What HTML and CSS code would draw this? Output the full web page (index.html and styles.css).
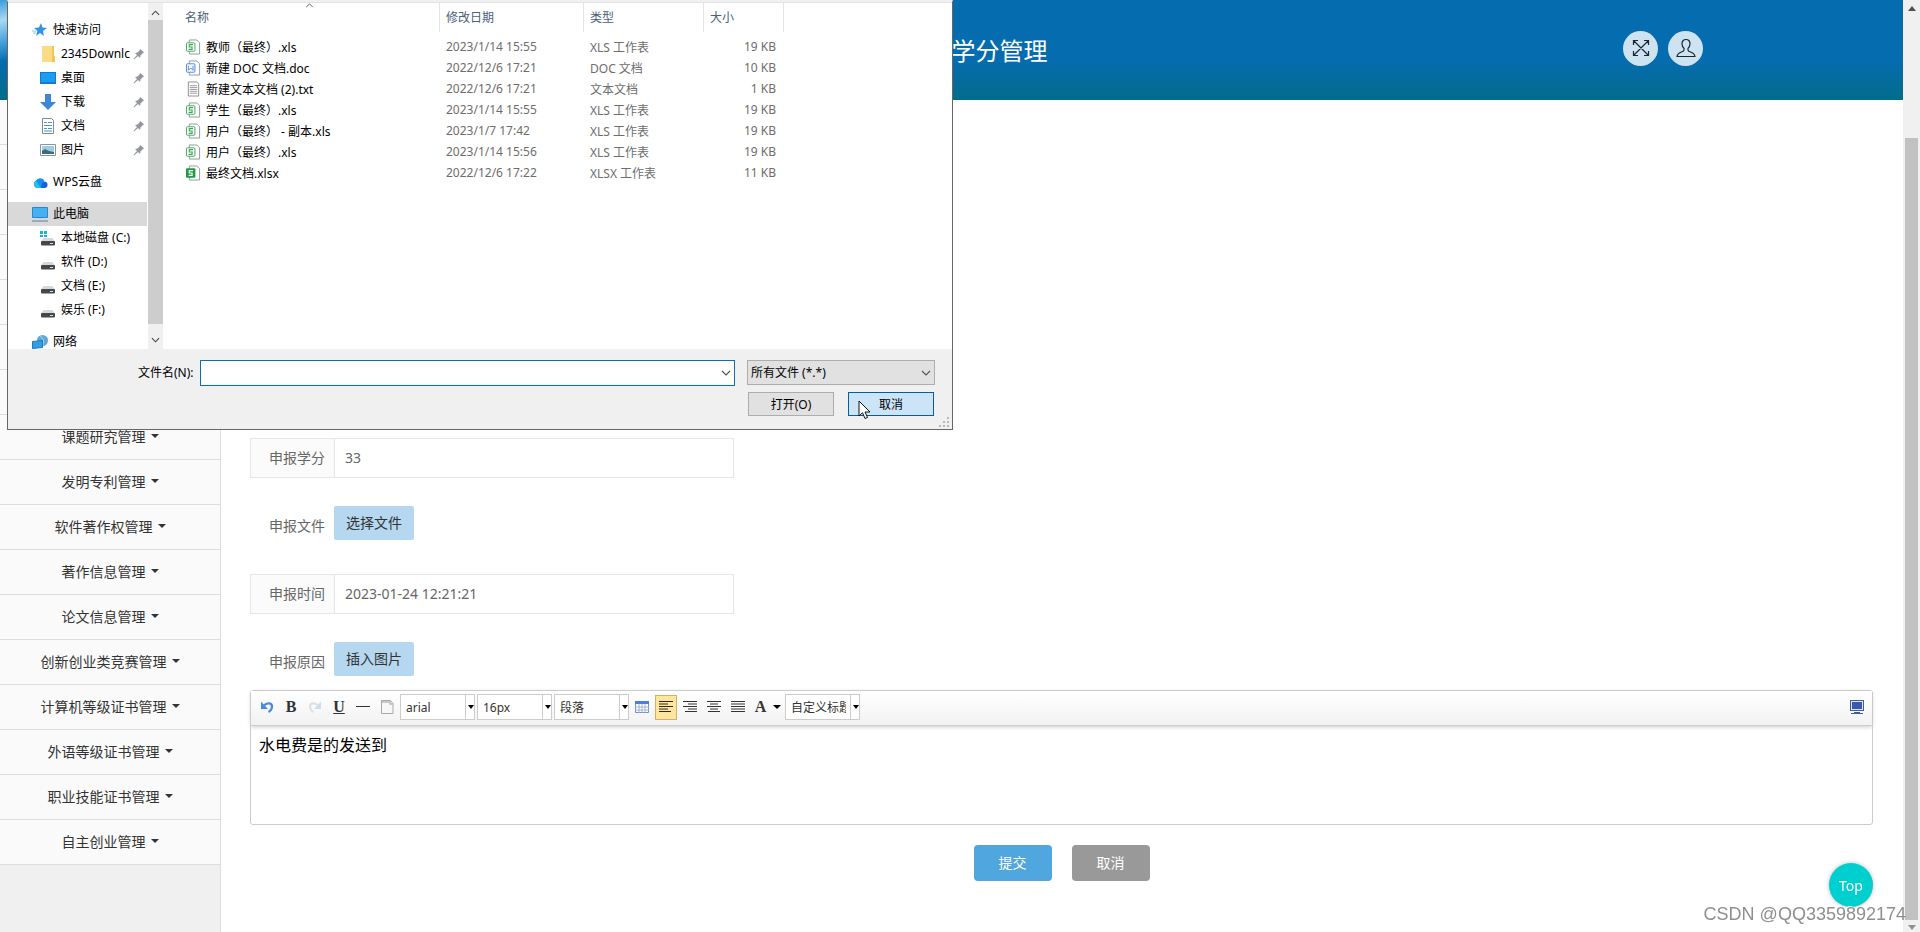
FILE: index.html
```html
<!DOCTYPE html>
<html lang="zh-CN">
<head>
<meta charset="utf-8">
<title>学分管理</title>
<link rel="stylesheet" href="styles.css">
</head>
<body>
<svg class="sprite" aria-hidden="true">
  <symbol id="pin" viewBox="0 0 12 12"><path d="M7.500 1L11 4.500 9.500 5.500 7.500 7.500 7 10 5 8 1 11.500.500 11 4 7 2 5 4.500 4.500 6.500 2.500z" fill="#92979d"/></symbol>
  <symbol id="xls" viewBox="0 0 16 16"><path d="M3.500.500h8l3 3v12h-11z" fill="#fff" stroke="#8c9a8f"/><rect x=".5" y="3.500" width="9" height="9" rx="1" fill="#fff" stroke="#3da65a"/><path d="M7.500 5.500h-4V8h3v2.500H2.800" fill="none" stroke="#3da65a" stroke-width="1.200"/></symbol>
  <symbol id="xlsx" viewBox="0 0 16 16"><path d="M3.500.500h8l3 3v12h-11z" fill="#fff" stroke="#8c9a8f"/><rect x="0" y="3" width="10" height="10" rx="1" fill="#219a43"/><path d="M7.500 5.500h-4V8h3v2.500H2.800" fill="none" stroke="#fff" stroke-width="1.200"/></symbol>
  <symbol id="doc" viewBox="0 0 16 16"><path d="M3.500.500h8l3 3v12h-11z" fill="#fff" stroke="#8e97a5"/><rect x=".5" y="3.500" width="9" height="9" rx="1" fill="#fff" stroke="#4c83d8"/><path d="M2.500 5.500v5L5 8l2.500 2.500v-5" fill="none" stroke="#4c83d8"/></symbol>
  <symbol id="txt" viewBox="0 0 16 16"><path d="M2.500.500h9l2 2v13h-11z" fill="#fff" stroke="#8a8a8a"/><path d="M4 4.500h8M4 6.500h8M4 8.500h8M4 10.500h8M4 12.500h8" stroke="#999"/></symbol>
  <symbol id="disk" viewBox="0 0 16 16"><path d="M4 8h8l3 3H1z" fill="#d4d6d8"/><rect x="1" y="11" width="14" height="4.500" rx="1" fill="#45484b"/><path d="M10 13.500h3" stroke="#cfe8d2"/></symbol>
  <symbol id="chev" viewBox="0 0 10 6"><path d="M1 1l4 4 4-4" fill="none" stroke="currentColor" stroke-width="1.200"/></symbol>
</svg>
<div class="page">
  <div class="view">
    <header class="top">
      <h1 class="title">学分管理</h1>
      <div class="tools">
        <button class="round" aria-label="全屏"><svg width="18" height="18" viewBox="0 0 18 18" fill="none" stroke="#1b2530" stroke-width="1.200"><path d="M1.500 1.500l15 15M16.500 1.500l-15 15M1.500 6V1.500H6M12 1.500h4.500V6M16.500 12v4.500H12M6 16.500H1.500V12"/></svg></button>
        <button class="round" aria-label="用户"><svg width="20" height="20" viewBox="0 0 20 20" fill="none" stroke="#1b2530" stroke-width="1.200"><path d="M10 1.500c-2.600 0-4.200 1.800-4 4.500.1 2 .9 3.400 2 4.400V12c0 1-.8 1.400-2.500 2-2.700.9-4 1.800-4.500 4.500h18c-.5-2.700-1.800-3.600-4.500-4.500-1.700-.6-2.500-1-2.500-2v-1.600c1.100-1 1.900-2.400 2-4.400.2-2.700-1.400-4.500-4-4.500z"/></svg></button>
      </div>
    </header>
    <div class="body">
      <nav class="side">
        <ul class="menu">
          <li></li><li></li><li></li><li></li><li></li><li></li><li></li>
          <li><a href="#">课题研究管理</a></li>
          <li><a href="#">发明专利管理</a></li>
          <li><a href="#">软件著作权管理</a></li>
          <li><a href="#">著作信息管理</a></li>
          <li><a href="#">论文信息管理</a></li>
          <li><a href="#">创新创业类竞赛管理</a></li>
          <li><a href="#">计算机等级证书管理</a></li>
          <li><a href="#">外语等级证书管理</a></li>
          <li><a href="#">职业技能证书管理</a></li>
          <li><a href="#">自主创业管理</a></li>
        </ul>
      </nav>
      <main class="main">
        <form class="form">
          <div class="row boxed"><label for="score">申报学分</label><input id="score" type="text" value="33"></div>
          <div class="row"><label for="file">申报文件</label><button id="file" type="button" class="pick">选择文件</button></div>
          <div class="row boxed"><label for="time">申报时间</label><input id="time" type="text" value="2023-01-24 12:21:21"></div>
          <div class="row"><label for="pic">申报原因</label><button id="pic" type="button" class="pick">插入图片</button></div>
          <div class="editor">
            <div class="bar">
              <button type="button" class="tb" aria-label="撤销"><svg width="16" height="16" viewBox="0 0 16 16" fill="none"><path d="M5 6.500C8 3 13.500 4 13 8c-.2 2.500-1.500 4-3.500 5" stroke="#4a8be0" stroke-width="2.200"/><path d="M2 2.500v7.500h7z" fill="#4a8be0"/></svg></button>
              <button type="button" class="tb letter" aria-label="加粗">B</button>
              <button type="button" class="tb" aria-label="重做"><svg width="16" height="16" viewBox="0 0 16 16" fill="none"><path d="M11 6.500C8 3 2.500 4 3 8c.2 2.500 1.500 4 3.500 5" stroke="#d9e3ed" stroke-width="2.200"/><path d="M14 2.500v7.500H7z" fill="#d0dce8"/></svg></button>
              <button type="button" class="tb letter under" aria-label="下划线">U</button>
              <button type="button" class="tb" aria-label="分隔线"><svg width="16" height="16" viewBox="0 0 16 16"><path d="M1 7.500h14" stroke="#333"/></svg></button>
              <button type="button" class="tb" aria-label="清空"><svg width="16" height="16" viewBox="0 0 16 16"><path d="M2.500 1.500h9l2.500 3v10H2.500z" fill="#f7f7f7" stroke="#a9a9a9"/><path d="M3 3h8v2h3" stroke="#bbb" fill="none" stroke-width="1.500"/></svg></button>
              <span class="combo"><select aria-label="字体"><option>arial</option></select></span>
              <span class="combo"><select aria-label="字号"><option>16px</option></select></span>
              <span class="combo"><select aria-label="段落格式"><option>段落</option></select></span>
              <button type="button" class="tb" aria-label="表格"><svg width="14" height="14" viewBox="0 0 14 14"><path d="M.5 1.500h13v11H.5z" fill="#fff" stroke="#6f8fc4"/><path d="M0 1h14v3H0z" fill="#4f7fd4"/><path d="M4 4v9M7 4v9M10 4v9M0 7h14M0 10h14" stroke="#9db4d8"/></svg></button>
              <button type="button" class="tb on" aria-label="左对齐"><svg width="14" height="12" viewBox="0 0 14 12"><path d="M0 .500h14M0 3h9M0 5.500h14M0 8h9M0 10.500h12" stroke="#33291a"/></svg></button>
              <button type="button" class="tb" aria-label="右对齐"><svg width="14" height="12" viewBox="0 0 14 12"><path d="M0 .500h14M5 3h9M0 5.500h14M5 8h9M2 10.500h12" stroke="#333"/></svg></button>
              <button type="button" class="tb" aria-label="居中"><svg width="14" height="12" viewBox="0 0 14 12"><path d="M0 .500h14M3 3h8M0 5.500h14M3 8h8M1 10.500h12" stroke="#333"/></svg></button>
              <button type="button" class="tb" aria-label="两端对齐"><svg width="14" height="12" viewBox="0 0 14 12"><path d="M0 .500h14M0 3h14M0 5.500h14M0 8h14M0 10.500h14" stroke="#333"/></svg></button>
              <button type="button" class="tb letter wide" aria-label="字体颜色">A<span class="tri"></span></button>
              <span class="combo"><select aria-label="自定义标题"><option>自定义标题</option></select></span>
              <button type="button" class="tb end" aria-label="全屏编辑"><svg width="14" height="14" viewBox="0 0 14 14"><rect x=".5" y=".5" width="13" height="10" fill="#dfe8f6" stroke="#3e5f96"/><rect x="2" y="2" width="10" height="7" fill="#3c57b4"/><path d="M4 12.500h6M1 13.500h12" stroke="#3e5f96"/></svg></button>
            </div>
            <textarea class="text" aria-label="申报原因内容">水电费是的发送到</textarea>
          </div>
          <div class="acts"><button type="button" class="act">提交</button><button type="button" class="act grey">取消</button></div>
        </form>
      </main>
    </div>
  </div>
  <div class="scroll">
    <svg width="8" height="5" viewBox="0 0 8 5"><path d="M0 5l4-5 4 5z" fill="#505050"/></svg>
    <div class="thumb"></div>
    <svg width="8" height="5" viewBox="0 0 8 5"><path d="M0 0l4 5 4-5z" fill="#909090"/></svg>
  </div>
</div>

<button class="totop">Top</button>
<div class="mark">CSDN @QQ3359892174</div>

<section class="dialog" aria-label="打开">
  <div class="panes">
    <div class="tree">
      <a class="node" href="#"><svg width="16" height="16" viewBox="0 0 16 16"><path d="M9 1l1.500 4.500 4.500.500-4 3 1 5-4-3-4 3 1.500-5L2 6l5-.5z" fill="#2f93e2"/><path d="M0 9h4M1 11h3" stroke="#8cc4ee"/></svg>快速访问</a>
      <a class="node sub" href="#"><svg width="16" height="16" viewBox="0 0 16 16"><path d="M2 0h12v16H2z" fill="#fbdc84"/><path d="M12 0h2v10h1v6h-3z" fill="#f1c453"/></svg><span class="cut">2345Downlc</span><svg class="pin"><use href="#pin"/></svg></a>
      <a class="node sub" href="#"><svg width="16" height="16" viewBox="0 0 16 16"><path d="M0 2h16v12H0z" fill="#1877c9"/><path d="M1 3h14v9H1z" fill="#189cf4"/></svg><span class="cut">桌面</span><svg class="pin"><use href="#pin"/></svg></a>
      <a class="node sub" href="#"><svg width="16" height="16" viewBox="0 0 16 16"><path d="M5 0h6v8h5l-8 8-8-8h5z" fill="#3c86d8"/></svg><span class="cut">下载</span><svg class="pin"><use href="#pin"/></svg></a>
      <a class="node sub" href="#"><svg width="16" height="16" viewBox="0 0 16 16"><path d="M2.500.500h9l2 2v13h-11z" fill="#fff" stroke="#7f8b95"/><path d="M4 4.500h3M8 4.500h4M4 7.500h8M4 10.500h3M8 10.500h4M4 13h8" stroke="#4e93c4"/></svg><span class="cut">文档</span><svg class="pin"><use href="#pin"/></svg></a>
      <a class="node sub" href="#"><svg width="16" height="16" viewBox="0 0 16 16"><path d="M.5 2.500h15v11H.5z" fill="#fff" stroke="#8595a3"/><path d="M2 4h12v8H2z" fill="#9fcbea"/><path d="M2 9l3-2 4 2 5 1v2H2z" fill="#3d6d74"/></svg><span class="cut">图片</span><svg class="pin"><use href="#pin"/></svg></a>
      <a class="node gap" href="#"><svg width="16" height="16" viewBox="0 0 16 16"><path d="M5 14a4 4 0 0 1-1-7.500A5 5 0 0 1 12 6l1 8z" fill="#1690f0"/><path d="M9 14l1-5 3-1.500a3.300 3.300 0 0 1-.5 6.500z" fill="#1460dd"/><path d="M5 14a4 4 0 0 1-1-7.500L9 14z" fill="#20c5e6"/></svg>WPS云盘</a>
      <a class="node gap cur" href="#"><svg width="16" height="16" viewBox="0 0 16 16"><path d="M.5 1.500h15v10H.5z" fill="#43b1f2" stroke="#3385bd"/><path d="M5 12.500h6" stroke="#bcd5e5"/><path d="M0 15h16" stroke="#5f7f9b"/></svg>此电脑</a>
      <a class="node sub" href="#"><svg width="16" height="16" viewBox="0 0 16 16"><use href="#disk"/><path d="M0 1h3v3H0zM4 1h3v3H4zM0 5h3v2H0zM4 5h3v2H4z" fill="#18b3dd"/></svg>本地磁盘 (C:)</a>
      <a class="node sub" href="#"><svg width="16" height="16"><use href="#disk"/></svg>软件 (D:)</a>
      <a class="node sub" href="#"><svg width="16" height="16"><use href="#disk"/></svg>文档 (E:)</a>
      <a class="node sub" href="#"><svg width="16" height="16"><use href="#disk"/></svg>娱乐 (F:)</a>
      <a class="node gap" href="#"><svg width="16" height="16" viewBox="0 0 16 16"><circle cx="10.500" cy="6.500" r="5.500" fill="#5aa9d6"/><path d="M8 2q5 3 3 9" stroke="#a5d8ef" fill="none"/><path d="M.5 7.500l10-1v7l-10 1z" fill="#2f9fe8" stroke="#2678b2"/></svg>网络</a>
    </div>
    <div class="vbar"><svg width="9" height="6" class="up"><use href="#chev"/></svg><div class="vthumb"></div><svg width="9" height="6"><use href="#chev"/></svg></div>
    <div class="files">
      <svg class="sort" width="9" height="5"><use href="#chev"/></svg>
      <table>
        <thead><tr><th class="c1">名称</th><th class="c2">修改日期</th><th class="c3">类型</th><th class="c4">大小</th></tr></thead>
        <tbody>
          <tr><td><span class="name"><svg><use href="#xls"/></svg>教师（最终）.xls</span></td><td>2023/1/14 15:55</td><td>XLS 工作表</td><td>19 KB</td></tr>
          <tr><td><span class="name"><svg><use href="#doc"/></svg>新建 DOC 文档.doc</span></td><td>2022/12/6 17:21</td><td>DOC 文档</td><td>10 KB</td></tr>
          <tr><td><span class="name"><svg><use href="#txt"/></svg>新建文本文档 (2).txt</span></td><td>2022/12/6 17:21</td><td>文本文档</td><td>1 KB</td></tr>
          <tr><td><span class="name"><svg><use href="#xls"/></svg>学生（最终）.xls</span></td><td>2023/1/14 15:55</td><td>XLS 工作表</td><td>19 KB</td></tr>
          <tr><td><span class="name"><svg><use href="#xls"/></svg>用户（最终） - 副本.xls</span></td><td>2023/1/7 17:42</td><td>XLS 工作表</td><td>19 KB</td></tr>
          <tr><td><span class="name"><svg><use href="#xls"/></svg>用户（最终）.xls</span></td><td>2023/1/14 15:56</td><td>XLS 工作表</td><td>19 KB</td></tr>
          <tr><td><span class="name"><svg><use href="#xlsx"/></svg>最终文档.xlsx</span></td><td>2022/12/6 17:22</td><td>XLSX 工作表</td><td>11 KB</td></tr>
        </tbody>
      </table>
    </div>
  </div>
  <div class="foot">
    <label for="fname">文件名(N):</label>
    <div class="fname"><input id="fname" type="text"><svg width="10" height="6"><use href="#chev"/></svg></div>
    <div class="right">
      <div class="ftype"><select aria-label="文件类型"><option>所有文件 (*.*)</option></select><svg width="10" height="6"><use href="#chev"/></svg></div>
      <div class="btns"><button>打开(O)</button><button class="hot">取消</button></div>
    </div>
  </div>
  <svg class="grip" width="11" height="11" viewBox="0 0 11 11"><path d="M8 0h2v2H8zM4 4h2v2H4zM8 4h2v2H8zM0 8h2v2H0zM4 8h2v2H4zM8 8h2v2H8z" fill="#b8b8b8"/></svg>
</section>
<svg class="cursor" width="13" height="20" viewBox="0 0 13 20"><path d="M1 1v15l3.500-3.300L7 18.500l2.500-1-2.500-5.500h5z" fill="#fff" stroke="#111"/></svg>
</body>
</html>
```
FILE: styles.css
```css
* { box-sizing: border-box; }
body {
  margin: 0;
  position: relative;
  font-family: "Noto Sans", "Noto Sans CJK SC", sans-serif;
  font-size: 14px;
  color: #333;
  background: #fff;
  overflow: hidden;
}
button, input, select, textarea { font: inherit; color: inherit; margin: 0; border-radius: 0; outline: 0; }
button { padding: 0; border: 0; background: none; }
select { appearance: none; }
a { color: inherit; text-decoration: none; }
svg { flex: none; }
.sprite { position: absolute; width: 0; height: 0; }

.page { display: flex; min-height: 100vh; }
.view { flex: 1; display: flex; flex-direction: column; }

/* header */
.top {
  height: 100px;
  display: flex;
  align-items: center;
  padding-left: 50%;
  padding-right: 200px;
  background:
    linear-gradient(165deg, #3b9ad8 0, #a9d8f3 20px, #4ba6df 40px, transparent 60px) 0 0 / 8px 60px no-repeat,
    linear-gradient(#056cb0 0, #056cb0 60%, #036c8a 100%);
}
.title { margin: 0; padding-top: 2px; font-size: 24px; line-height: 36px; font-weight: 400; color: #fff; }
.tools { margin-left: auto; display: flex; gap: 10px; padding-bottom: 4px; }
.round {
  width: 35px;
  height: 35px;
  border-radius: 50%;
  background: #cde3f1;
  display: flex;
  align-items: center;
  justify-content: center;
}

.body { flex: 1; display: flex; }

/* side menu */
.side { width: 221px; background: #f0f0f0; border-right: 1px solid #ddd; }
.menu { list-style: none; margin: 0; padding: 0; }
.menu li { height: 45px; background: #fafafa; border-bottom: 1px solid #ddd; }
.menu a { display: flex; height: 44px; align-items: center; justify-content: center; gap: 5px; padding-bottom: 2px; }
.menu a::after { content: ""; border: 4px solid transparent; border-top-color: #333; border-bottom: 0; }

/* form */
.main { flex: 1; padding: 338px 30px 0 29px; }
.form { display: flex; flex-direction: column; }
.row { width: 484px; height: 40px; margin-bottom: 28px; display: flex; color: #666; border: 1px solid transparent; border-width: 0 1px; }
.row label { width: 84px; flex: none; padding: 0 10px 2px 0; display: flex; align-items: center; justify-content: flex-end; }
.boxed { border: 1px solid #e6e6e6; }
.boxed label { padding-right: 9px; background: #fbfbfb; border-right: 1px solid #e6e6e6; }
.row input { flex: 1; min-width: 0; border: 0; padding: 0 10px 2px; background: #fff; }
.pick { width: 80px; height: 34px; margin-left: -1px; padding-bottom: 2px; border-radius: 2px; background: #b5d7f0; color: #333; }

.editor { margin-top: -20px; border: 1px solid #ccc; border-radius: 3px; }
.bar {
  height: 35px;
  padding: 4px 4px 6px 5px;
  display: flex;
  align-items: center;
  gap: 2px;
  background: linear-gradient(#fff, #f2f2f2);
  border-bottom: 1px solid #ccc;
  box-shadow: 0 1px 4px #ccc;
  font-size: 12px;
}
.tb { width: 22px; height: 25px; display: flex; align-items: center; justify-content: center; }
.tb.on { background: #ffe69f; border: 1px solid #dcac6c; }
.letter { font-family: "Liberation Serif", serif; font-size: 16px; font-weight: 700; line-height: 20px; }
.under { text-decoration: underline; }
.wide { width: 30px; margin-left: 2px; gap: 7px; }
.tri { border: 4px solid transparent; border-top-color: #000; border-bottom: 0; }
.combo { position: relative; width: 75px; height: 26px; }
.combo select { width: 100%; height: 100%; border: 1px solid #ccc; background: #fff; padding: 0 13px 0 5px; display: block; }
.combo::after { content: ""; position: absolute; right: 1px; top: 11px; border: 3px solid transparent; border-top: 4px solid #000; border-bottom: 0; }
.combo::before { content: ""; position: absolute; right: 9px; top: 1px; bottom: 1px; width: 1px; background: #ccc; }
.tb.end { margin-left: auto; }
.text { display: block; width: 100%; height: 98px; border: 0; padding: 7px 8px; font-size: 16px; line-height: 24px; color: #000; background: transparent; resize: none; }

.acts { display: flex; justify-content: center; gap: 20px; margin-top: 20px; }
.act { width: 78px; height: 36px; padding-bottom: 2px; border-radius: 4px; background: #50a6de; color: #fff; }
.grey { background: #999; }

/* window scrollbar */
.scroll { width: 17px; background: #f0f0f0; display: flex; flex-direction: column; align-items: center; padding: 6px 0 2px; }
.thumb { width: 13px; flex: 1; margin: 127px 0 5px; background: #c1c1c1; }

.totop {
  position: fixed;
  right: 47px;
  bottom: 25px;
  width: 44px;
  height: 44px;
  border-radius: 50%;
  background: #00cfd0;
  color: #fff;
  box-shadow: 0 0 4px #bbb;
}
.mark { position: fixed; right: 14px; bottom: 7px; font: 18px/22px "Liberation Sans", sans-serif; color: #8f8f8f; text-shadow: -1px -1px #fff; }

/* file dialog */
.dialog {
  position: absolute;
  left: 7px;
  top: 0;
  width: 946px;
  border: 1px solid #666;
  border-top: 2px solid #f0f0f0;
  background: #f0f0f0;
  font-size: 12px;
  color: #000;
}
.panes { height: 347px; display: flex; background: #fff; border-top: 1px solid #e2e2e2; overflow: hidden; }
.tree { width: 139px; padding-top: 15px; }
.node { height: 24px; padding-left: 24px; display: flex; align-items: center; gap: 5px; line-height: 12px; white-space: nowrap; }
.sub { padding-left: 32px; }
.gap { margin-top: 8px; }
.cur { background: #d9d9d9; }
.cut { flex: 1; }
.pin { width: 12px; height: 12px; margin: 0 2px 0 -3px; }
.vbar { width: 15px; margin-left: 1px; background: #f0f0f0; color: #444; display: flex; flex-direction: column; align-items: center; padding: 7px 0 6px; }
.up { transform: rotate(180deg); }
.vthumb { flex: 1; width: 15px; margin: 4px 0 13px; background: #cdcdcd; }
.files { position: relative; flex: 1; padding-left: 15px; }
.sort { position: absolute; left: 142px; top: 0; transform: rotate(180deg); color: #666; }
.files table { border-collapse: separate; border-spacing: 0; table-layout: fixed; width: 606px; }
.files th { height: 29px; padding: 0 0 2px 6px; text-align: left; font-weight: 400; color: #4c607a; border-right: 1px solid #e5e5e5; }
.files th.c1 { width: 262px; padding-left: 7px; }
.c2 { width: 144px; }
.c3 { width: 120px; }
.c4 { width: 80px; }
.files td { height: 21px; padding: 0 0 0 6px; color: #6d6d6d; white-space: nowrap; }
.files td:first-child { padding-left: 8px; }
.files td:last-child { text-align: right; padding-right: 8px; }
.files tbody::before { content: ""; display: table-row; height: 4px; }
.name { display: flex; align-items: center; gap: 5px; color: #000; }
.name svg { width: 15px; height: 16px; }

.foot { display: flex; align-items: flex-start; padding: 11px 17px 13px 130px; height: 80px; }
.foot label { width: 62px; line-height: 26px; }
.fname { position: relative; flex: 1; height: 26px; margin-right: 12px; }
.fname input { width: 100%; height: 100%; border: 1px solid #0a6fb5; background: #fff; display: block; padding: 0 24px 0 4px; }
.fname svg, .ftype svg { position: absolute; right: 4px; top: 10px; color: #555; }
.right { width: 188px; }
.ftype { position: relative; height: 25px; margin-bottom: 7px; }
.ftype select { width: 100%; height: 100%; border: 1px solid #adadad; background: #e1e1e1; padding: 0 3px; display: block; }
.btns { display: flex; justify-content: space-between; padding: 0 1px; }
.btns button { width: 86px; height: 24px; padding-bottom: 1px; border: 1px solid #adadad; background: #e1e1e1; }
.btns .hot { border-color: #0a5a9c; background: #cce4f7; }
.grip { position: absolute; right: 2px; bottom: 1px; }
.cursor { position: absolute; left: 858px; top: 400px; }
```
